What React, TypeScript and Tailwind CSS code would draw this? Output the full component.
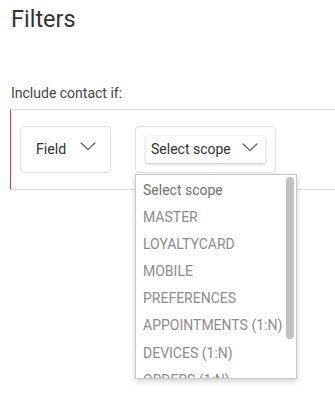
import React from "react";

const Chevron = () => (
  <svg width="16" height="9" viewBox="0 0 16 9" fill="none">
    <path d="M1 1 L8 7.5 L15 1" stroke="#666" strokeWidth="1.3" strokeLinecap="round" strokeLinejoin="round" />
  </svg>
);

const items = [
  "MASTER",
  "LOYALTYCARD",
  "MOBILE",
  "PREFERENCES",
  "APPOINTMENTS (1:N)",
  "DEVICES (1:N)",
  "ORDERS (1:N)",
];

export default function App() {
  return (
    <div className="w-[335px] h-[411px] bg-white overflow-hidden relative" style={{ fontFamily: "Roboto, 'Liberation Sans', sans-serif" }}>
      <h1 className="pl-[11px] pt-[5px] text-[23.5px] leading-[28px] text-[#333]">Filters</h1>
      <div className="pl-[11px] mt-[50px] text-[14px] leading-[20px] text-[#444]">Include contact if:</div>
      <div className="ml-[10px] mt-[6px] border-t border-b border-[#dedede] border-l border-l-[#e53935] pl-[9px] pt-[16px] pb-[16px] flex gap-[24px] relative">
        <div className="w-[91px] h-[47px] border border-[#e2e2e2] rounded-[4px] flex items-center pl-[15px] pr-[14px] justify-between">
          <span className="text-[14.2px] text-[#333]">Field</span>
          <span className="-mt-[6px]"><Chevron /></span>
        </div>
        <div className="w-[141px] h-[47px] border border-[#e2e2e2] rounded-[4px] flex items-center pl-[10px]">
          <div className="w-[119px] h-[27px] flex items-center justify-between pl-[5px] pr-[7px] bg-white shadow-[0_1px_3px_rgba(0,0,0,0.25)]">
            <span className="text-[14px] text-[#333]">Select scope</span>
            <span className="-mt-[4px]"><Chevron /></span>
          </div>
        </div>
        <div className="absolute left-[124px] top-[64px] w-[162px] h-[205px] bg-white border border-[#c8c8c8] shadow-[0_2px_6px_rgba(0,0,0,0.2)] overflow-hidden z-10">
          <div className="pt-[2px] pl-[7px]">
            <div className="h-[27.1px] leading-[27px] text-[14px] text-[#707070]">Select scope</div>
            {items.map((t) => (
              <div key={t} className="h-[27.1px] leading-[27px] text-[14px] text-[#8c8c8c] whitespace-nowrap">{t}</div>
            ))}
          </div>
          <div className="absolute right-[2px] top-[2px] w-[8px] h-[162px] rounded-full bg-[#c1c1c1]" />
        </div>
      </div>
    </div>
  );
}
